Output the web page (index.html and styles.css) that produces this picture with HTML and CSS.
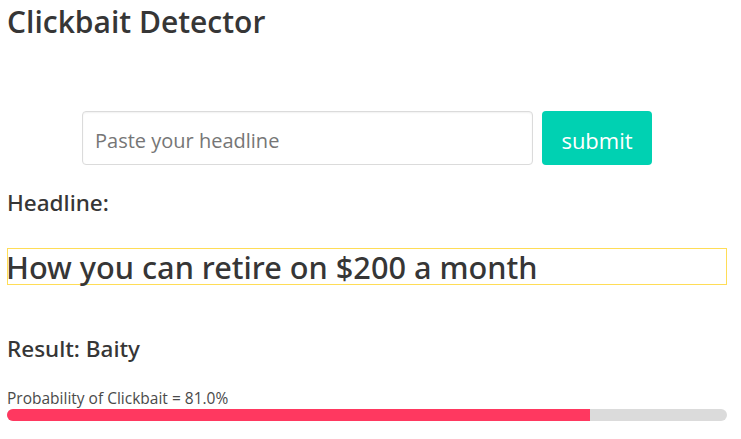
FILE: index.html
```html
<!DOCTYPE html>
<html lang="en">
<head>
<meta charset="utf-8">
<title>Clickbait Detector</title>
<link rel="stylesheet" href="styles.css">
</head>
<body>
<main class="page">
  <h1 class="title">Clickbait Detector</h1>
  <form class="search">
    <input class="search-input" type="text" placeholder="Paste your headline">
    <button class="search-button" type="button">submit</button>
  </form>
  <h2 class="label">Headline:</h2>
  <div class="headline-box">How you can retire on $200 a month</div>
  <h2 class="label result">Result: Baity</h2>
  <p class="prob">Probability of Clickbait = 81.0%</p>
  <div class="bar"><div class="bar-fill" style="width: 81%"></div></div>
</main>
</body>
</html>
```
FILE: styles.css
```css
html, body {
  margin: 0;
  padding: 0;
  background: #ffffff;
}
.page {
  width: 720px;
  padding: 0 0 0 7px;
  font-family: "Open Sans", "Noto Sans", sans-serif;
  color: #363636;
}
.title {
  margin: 2px 0 0;
  font-size: 30px;
  font-weight: 600;
  line-height: 40px;
  color: #363636;
}
.search {
  display: flex;
  justify-content: center;
  gap: 9px;
  margin: 69px 0 0;
}
.search-input {
  box-sizing: border-box;
  width: 451px;
  height: 54px;
  margin: 0;
  padding: 4px 12px 0;
  border: 1px solid #dbdbdb;
  border-radius: 4px;
  box-shadow: inset 0 1px 2px rgba(10, 10, 10, 0.06);
  font-family: inherit;
  font-size: 20px;
  color: #363636;
  outline: none;
}
.search-input::placeholder {
  color: #767676;
}
.search-button {
  box-sizing: border-box;
  width: 110px;
  height: 54px;
  margin: 0;
  padding: 4px 0 0;
  border: 0;
  border-radius: 4px;
  background: #00d1b2;
  color: #ffffff;
  font-family: inherit;
  font-size: 22px;
  cursor: pointer;
}
.label {
  margin: 23px 0 0;
  font-family: "Noto Sans", "Open Sans", sans-serif;
  font-size: 22.5px;
  font-weight: 500;
  line-height: 30px;
  color: #363636;
}
.headline-box {
  box-sizing: border-box;
  height: 37px;
  margin: 30px 0 0;
  padding: 1px 0 0;
  border: 1px solid #ffdd57;
  font-family: "Noto Sans", "Open Sans", sans-serif;
  font-size: 30.7px;
  font-weight: 500;
  line-height: 34px;
  text-indent: -2px;
  color: #363636;
  white-space: nowrap;
}
.result {
  margin-top: 49px;
}
.prob {
  margin: 25px 0 0;
  font-size: 15.5px;
  line-height: 18px;
  color: #4a4a4a;
}
.bar {
  height: 12px;
  margin-top: 2px;
  border-radius: 6px;
  background: #dbdbdb;
  overflow: hidden;
}
.bar-fill {
  height: 100%;
  background: #ff3860;
}
```
